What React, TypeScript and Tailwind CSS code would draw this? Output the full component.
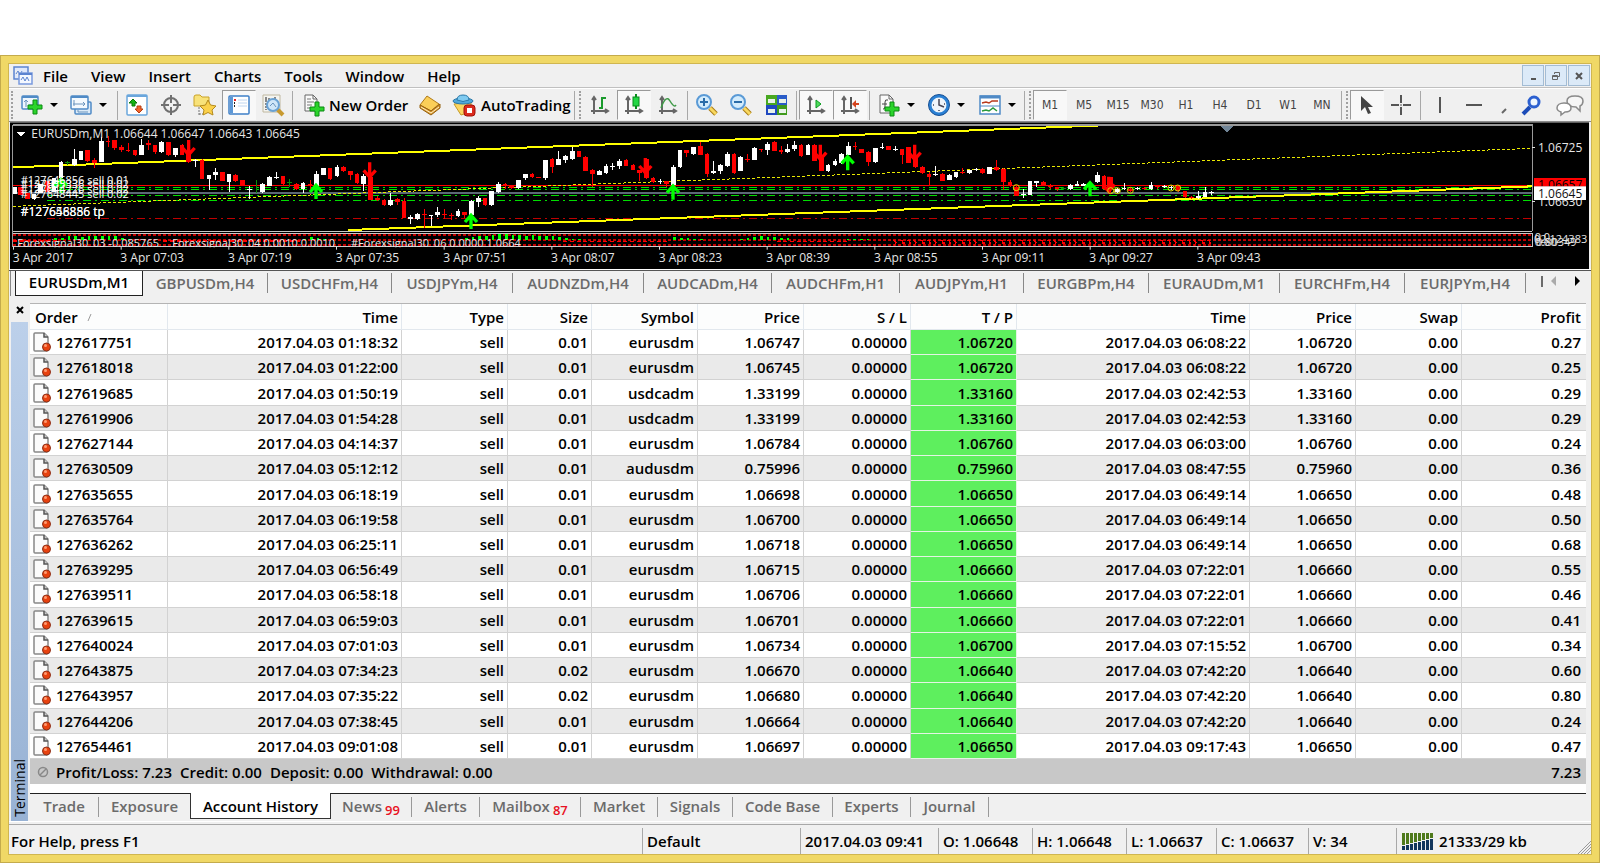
import React from "react";

type Children = { children?: React.ReactNode };

const UI = "font-['Open_Sans','Noto_Sans',sans-serif]";

/* ---------- chart data: [x, bodyTop, bodyBottom, high, low, colour], three units per pixel ---------- */
type Candle = [number, number, number, number, number, "w" | "r" | "g"];

const candlesA: Candle[] = [
  [45, 207, 227, 207, 227, "w"], [62, 208, 230, 208, 232, "r"], [82, 225, 243, 225, 243, "r"], [102, 228, 243, 228, 246, "w"],
  [122, 197, 225, 197, 225, "w"], [142, 190, 222, 190, 222, "r"], [162, 180, 222, 180, 222, "w"], [183, 133, 180, 130, 222, "w"],
  [203, 132, 135, 128, 140, "g"], [223, 124, 140, 93, 145, "w"], [243, 100, 125, 100, 125, "w"], [263, 97, 128, 97, 133, "r"],
  [284, 126, 134, 120, 150, "r"], [304, 68, 133, 58, 133, "w"], [324, 68, 71, 53, 88, "r"], [344, 67, 90, 65, 97, "r"],
  [364, 88, 95, 82, 103, "r"], [384, 95, 98, 74, 103, "r"], [405, 97, 112, 97, 115, "r"], [425, 80, 110, 62, 112, "w"],
  [445, 76, 80, 65, 95, "r"], [465, 82, 103, 80, 107, "r"], [485, 73, 102, 70, 104, "w"], [505, 73, 110, 73, 115, "r"],
  [526, 90, 112, 90, 117, "w"], [546, 80, 110, 78, 110, "r"], [566, 100, 133, 80, 135, "r"], [586, 125, 130, 122, 147, "w"],
  [606, 125, 182, 123, 183, "r"], [627, 170, 183, 170, 215, "w"], [647, 163, 172, 150, 185, "w"], [667, 162, 188, 162, 188, "r"],
  [687, 168, 192, 168, 222, "w"], [707, 170, 190, 168, 192, "r"], [728, 187, 203, 187, 205, "r"], [748, 212, 216, 205, 243, "w"],
  [768, 203, 205, 185, 225, "g"], [788, 197, 222, 195, 225, "w"], [809, 177, 203, 175, 203, "w"], [829, 177, 180, 162, 182, "w"],
  [849, 175, 197, 173, 200, "r"], [869, 192, 195, 182, 207, "g"], [889, 197, 212, 195, 215, "r"], [909, 195, 212, 193, 225, "w"],
  [930, 197, 200, 185, 212, "r"], [950, 168, 205, 160, 222, "w"], [970, 150, 170, 150, 172, "w"], [990, 150, 182, 150, 185, "r"],
  [1011, 147, 175, 140, 178, "w"], [1031, 148, 160, 145, 162, "r"], [1051, 158, 170, 158, 187, "r"], [1071, 168, 195, 165, 198, "r"],
  [1091, 173, 197, 168, 220, "w"], [1111, 177, 245, 170, 247, "r"], [1132, 240, 247, 235, 250, "r"], [1152, 245, 262, 243, 265, "r"],
  [1172, 245, 262, 225, 265, "w"], [1192, 243, 252, 240, 262, "r"],
];
const candlesB: Candle[] = [
  [12, 248, 300, 240, 300, "r"], [32, 298, 303, 292, 318, "w"], [53, 287, 303, 285, 305, "w"], [73, 289, 292, 273, 330, "r"],
  [93, 290, 293, 290, 323, "w"], [113, 283, 290, 268, 297, "w"], [134, 287, 290, 273, 303, "r"], [154, 291, 294, 285, 307, "r"],
  [174, 278, 295, 273, 297, "w"], [194, 283, 292, 283, 300, "r"], [214, 250, 290, 245, 292, "w"], [235, 240, 253, 235, 268, "w"],
  [255, 240, 262, 240, 263, "r"], [275, 220, 262, 218, 264, "w"], [295, 197, 222, 193, 225, "w"], [315, 199, 202, 195, 213, "r"],
  [335, 202, 210, 200, 212, "r"], [355, 187, 210, 185, 212, "w"], [376, 168, 180, 168, 187, "w"], [396, 168, 178, 165, 180, "r"],
  [416, 177, 181, 177, 181, "r"], [436, 127, 180, 127, 187, "w"], [456, 122, 147, 120, 165, "r"], [476, 123, 140, 100, 140, "w"],
  [497, 115, 127, 110, 135, "w"], [517, 98, 122, 87, 125, "w"], [537, 98, 117, 98, 118, "r"], [557, 118, 160, 115, 160, "r"],
  [577, 155, 168, 152, 207, "r"], [598, 160, 170, 157, 172, "w"], [618, 145, 165, 137, 167, "w"], [638, 143, 148, 135, 155, "w"],
  [658, 128, 145, 122, 153, "w"], [678, 125, 143, 122, 145, "r"], [699, 140, 155, 138, 156, "r"], [719, 157, 165, 155, 188, "r"],
  [739, 122, 180, 120, 182, "r"], [759, 180, 192, 178, 195, "r"], [780, 189, 192, 182, 197, "w"], [800, 190, 197, 188, 208, "r"],
  [820, 148, 200, 140, 202, "w"], [840, 97, 148, 95, 150, "w"], [860, 97, 105, 95, 117, "r"], [880, 88, 108, 86, 110, "w"],
  [901, 85, 110, 73, 112, "r"], [921, 108, 168, 106, 178, "r"], [941, 160, 164, 128, 167, "w"], [961, 142, 160, 138, 168, "w"],
  [982, 108, 145, 102, 147, "w"], [1002, 108, 165, 105, 168, "r"], [1022, 117, 158, 115, 160, "w"], [1042, 122, 126, 108, 132, "r"],
  [1063, 90, 125, 88, 127, "w"], [1083, 93, 97, 92, 103, "r"], [1103, 78, 97, 73, 112, "w"], [1123, 72, 98, 70, 98, "r"],
  [1143, 95, 102, 85, 108, "r"], [1163, 93, 102, 78, 105, "w"], [1183, 80, 93, 68, 98, "w"],
];
const candlesC: Candle[] = [
  [3, 80, 115, 78, 117, "r"], [24, 80, 110, 78, 112, "w"], [44, 80, 128, 78, 130, "r"], [64, 120, 158, 100, 160, "r"],
  [84, 140, 160, 138, 162, "w"], [105, 128, 142, 122, 145, "w"], [125, 108, 135, 106, 137, "w"], [145, 83, 110, 73, 112, "w"],
  [165, 85, 88, 72, 95, "r"], [185, 93, 105, 92, 106, "r"], [205, 102, 132, 100, 143, "r"], [226, 90, 132, 90, 134, "w"],
  [246, 86, 90, 75, 92, "w"], [266, 85, 95, 83, 97, "r"], [286, 93, 97, 83, 98, "w"], [306, 93, 110, 92, 138, "r"],
  [326, 88, 135, 86, 136, "r"], [347, 115, 148, 100, 150, "r"], [367, 148, 165, 143, 168, "r"], [387, 168, 178, 163, 200, "r"],
  [407, 168, 172, 145, 174, "w"], [427, 168, 188, 166, 190, "r"], [448, 170, 185, 168, 187, "w"], [468, 163, 178, 161, 180, "w"],
  [488, 161, 165, 150, 167, "r"], [508, 157, 165, 155, 167, "w"], [528, 154, 157, 150, 158, "w"], [548, 153, 165, 150, 167, "r"],
  [568, 148, 167, 146, 169, "w"], [589, 147, 157, 127, 160, "r"], [610, 153, 192, 150, 215, "r"], [630, 192, 205, 187, 207, "r"],
  [650, 207, 233, 200, 235, "r"], [670, 228, 231, 213, 240, "w"], [690, 190, 230, 188, 232, "w"], [710, 190, 194, 188, 207, "w"],
  [731, 192, 202, 190, 205, "r"], [751, 204, 207, 197, 213, "r"], [771, 208, 213, 207, 218, "r"], [791, 209, 212, 206, 215, "g"],
  [811, 200, 213, 197, 215, "w"], [831, 198, 203, 190, 205, "w"], [851, 198, 203, 196, 205, "w"], [892, 170, 193, 162, 195, "w"],
  [912, 173, 213, 171, 215, "r"], [932, 178, 213, 176, 225, "r"], [952, 214, 222, 210, 226, "w"], [972, 210, 214, 195, 217, "w"],
  [992, 212, 220, 207, 223, "r"], [1012, 209, 212, 206, 215, "w"], [1033, 209, 213, 206, 215, "r"], [1053, 200, 213, 193, 215, "w"],
  [1073, 204, 208, 200, 213, "r"], [1093, 203, 207, 200, 210, "w"], [1113, 206, 210, 203, 217, "w"], [1134, 202, 220, 200, 222, "r"],
  [1155, 220, 238, 218, 240, "r"], [1175, 236, 240, 234, 242, "r"], [1195, 235, 240, 218, 242, "w"], [1215, 222, 236, 207, 238, "w"],
  [1235, 222, 226, 218, 230, "w"],
];

const candles: Candle[] = [
  ...candlesA,
  ...candlesB.map((c): Candle => [c[0] + 1200, c[1], c[2], c[3], c[4], c[5]]),
  ...candlesC.map((c): Candle => [c[0] + 2400, c[1], c[2], c[3], c[4], c[5]]),
];
const tone = { w: "#fff", r: "#f00", g: "#0a8a0a" };

const sellArrows: [number, number][] = [[566, 66], [1109, 133], [1936, 120], [2461, 80], [2744, 80], [3326, 176]];
const buyArrows: [number, number][] = [[183, 180], [948, 198], [1413, 288], [2019, 200], [2543, 112], [3270, 190]];
const rings: [number, number][] = [[3049, 209], [3332, 218], [3352, 218], [3391, 217], [3513, 210], [3533, 210]];

const dates = ["3 Apr 2017", "3 Apr 07:03", "3 Apr 07:19", "3 Apr 07:35", "3 Apr 07:51", "3 Apr 08:07", "3 Apr 08:23", "3 Apr 08:39", "3 Apr 08:55", "3 Apr 09:11", "3 Apr 09:27", "3 Apr 09:43"];

/* oscillator columns: [firstX, heights] */
const greenRuns: [number, number[]][] = [
  [163, [6, 8, 12, 14, 10, 12, 14, 12, 14, 12, 6, 4]],
  [910, [5, 9, 7, 4]],
  [1395, [6, 10, 14, 14, 16, 20, 18, 16, 16, 14, 16, 14, 14, 12, 10, 8, 5, 3]],
  [2020, [9, 6, 8, 5, 3]],
  [2220, [5, 6, 11, 13, 11, 10, 8, 6]],
  [2540, [4, 4, 3, 3]],
];
const redMarks: number[] = [];
for (let x = 2680; x < 3640; x += 20) redMarks.push(x);

function PriceChart() {
  return (
    <svg
      className="block h-[147px] w-full bg-black font-['Open_Sans','Noto_Sans',sans-serif] font-normal"
      viewBox="30 12 4740 441"
      preserveAspectRatio="xMinYMid slice"
      role="img"
      aria-label="EURUSDm,M1 price chart"
      fontSize="36"
      fill="#e6e6e6"
    >
      <g shapeRendering="crispEdges" fill="none">
        <path d="M30 13.500H4770" stroke="#606060" strokeWidth="3" />
        <path d="M39 202H4597" stroke="#f00" strokeWidth="3" />
        <path d="M39 225H4597" stroke="#5c6876" strokeWidth="6" />
        <g stroke="#0d0" strokeWidth="3" strokeDasharray="24 12 6 12">
          <path d="M140 208H4597M140 214H4597M140 232H4597M140 247H4597" />
        </g>
        <path d="M140 302H4597" stroke="#c00000" strokeWidth="3" strokeDasharray="24 12 6 12" />
        <path d="M39 265L4597 91" stroke="#e8e800" strokeWidth="3" strokeDasharray="9 6" />
        <path d="M39 148L3308 22" stroke="#ff0" strokeWidth="6" />
        <path d="M1045 336L4597 205" stroke="#ff0" strokeWidth="6" />
      </g>
      <g shapeRendering="crispEdges">
        {candles.map(([x, top, bottom, high, low, c], i) => (
          <g key={i} fill={tone[c]}>
            <rect x={x - 1} y={high} width="3" height={low - high} />
            <rect x={x - 7} y={top} width="14" height={bottom - top} />
          </g>
        ))}
      </g>
      <g fill="none" stroke="#f00" strokeWidth="10">
        {sellArrows.map(([x, y]) => (
          <path key={x} d={`M${x} ${y}v40M${x - 18} ${y + 24}l18 20l18 -20`} />
        ))}
      </g>
      <g fill="none" stroke="#0f0" strokeWidth="10">
        {buyArrows.map(([x, y]) => (
          <path key={x} d={`M${x} ${y + 45}v-40M${x - 18} ${y + 24}l18 -20l18 20`} />
        ))}
      </g>
      <g fill="none" stroke="#dd0" strokeWidth="3">
        {rings.map(([x, y]) => (
          <circle key={x} cx={x} cy={y} r="9" />
        ))}
      </g>
      <g shapeRendering="crispEdges">
        <path d="M39 351H4597M39 366H4597M39 381H4597" stroke="#c00000" strokeWidth="4" strokeDasharray="8 7" />
        {greenRuns.map(([x0, hs]) => hs.map((h, i) => (
          <rect key={`${x0}-${i}`} x={x0 + i * 20} y={367 - h} width="8" height={h} fill="#0f0" />
        )))}
        <path d="M39 368H180M490 368H900M1690 370H2010M2330 370H2540" stroke="#f00" strokeWidth="5" strokeDasharray="12 8" />
        {redMarks.map((x, i) => (
          <path key={x} d={i % 3 ? `M${x} 367h8v8h6` : `M${x} 366l8 8l-6 8`} stroke="#f00" strokeWidth="4" fill="none" />
        ))}
        <path d="M38 21H4597V339M38 21V386" stroke="#9a9a9a" strokeWidth="4" fill="none" />
        <path d="M38 339H4597M38 345H4597V386H38" stroke="#c8c8c8" strokeWidth="3" fill="none" />
        <path d="M4597 87h8M4597 250h8" stroke="#ddd" strokeWidth="3" />
        <path d="M3661 24h39l-19 18z" fill="#708496" />
        <path d="M47 41h30l-15 15z" fill="#fff" />
      </g>
      <text x="94" y="61">EURUSDm,M1 1.06644 1.06647 1.06643 1.06645</text>
      <g fill="#fff" fontSize="33">
        <text x="62" y="199">#127646856 sell 0.01</text>
        <text x="62" y="210">#127635336 sell 0.02</text>
        <text x="62" y="226">#127644226 sell 0.02</text>
        <text x="62" y="239">#127648445 sell 0.02</text>
      </g>
      <text x="62" y="294" fill="#fff">#127646856 tp</text>
      <text x="62" y="294" fill="#fff">#127658886 tp</text>
      <g fontSize="33">
        <text x="52" y="386">Forexsignal30_03 -0.085765</text>
        <text x="517" y="386">Forexsignal30_04 0.0010 0.0010</text>
        <text x="1053" y="386">#Forexsignal30_06 0.0000 1.0664</text>
      </g>
      <rect x="36" y="388" width="4560" height="10" fill="#000" />
      {dates.map((d, i) => (
        <g key={d}>
          <rect x={39 + i * 323} y="386" width="3" height="9" fill="#ddd" />
          <text x={38 + i * 323} y="431">{d}</text>
        </g>
      ))}
      <text x="4614" y="101">1.06725</text>
      <text x="4614" y="263">1.06630</text>
      <rect x="4602" y="180" width="156" height="26" fill="#f00" />
      <svg x="4602" y="180" width="156" height="26" viewBox="4602 180 156 26">
        <text x="4614" y="214" fill="#000">1.06657</text>
      </svg>
      <rect x="4602" y="205" width="156" height="41" fill="#fff" />
      <text x="4614" y="239" fill="#111">1.06645</text>
      <g fontSize="33">
        <text x="4604" y="370">0.0</text>
        <text x="4608" y="384">0.80349</text>
        <text x="4602" y="375">02.124383</text>
        <text x="4604" y="384">0.60</text>
      </g>
    </svg>
  );
}

/* ---------- toolbar pieces ---------- */
function Icon({ w = 24, children }: { w?: number } & Children) {
  return (
    <svg width={w} height="24" viewBox={`0 0 ${w} 24`} fill="none" className="block shrink-0" aria-hidden="true">
      {children}
    </svg>
  );
}
function Tool({ label, on, children }: { label: string; on?: boolean } & Children) {
  return (
    <button
      type="button"
      aria-label={label}
      className={`flex h-[30px] w-[34px] shrink-0 items-center justify-center border ${on ? "border-transparent border-l-[#9a9a9a] border-t-[#9a9a9a] bg-[#f8f8f8]" : "border-transparent"}`}
    >
      {children}
    </button>
  );
}
function Caret({ label }: { label: string }) {
  return (
    <button type="button" aria-label={label} className="flex h-[30px] w-[15px] shrink-0 items-center pl-px">
      <svg width="8" height="4" viewBox="0 0 8 4" aria-hidden="true"><path d="M0 0h8L4 4z" fill="#000" /></svg>
    </button>
  );
}
function Sep() {
  return <span className="mx-[2px] h-[29px] w-px shrink-0 bg-[#a8a8a8]" />;
}
function Grip() {
  return <span className="ml-[2px] mr-[2px] h-[28px] shrink-0 border-l-2 border-dotted border-[#a0a0a0]" />;
}
const Axes = () => (
  <path d="M6 4v17M3 18h17M4 7l2-3 2 3M17 16l3 2-3 2" stroke="#666" strokeWidth="2" />
);
const GreenPlus = ({ x, y }: { x: number; y: number }) => (
  <path d={`M${x + 5} ${y}h4v5h5v4h-5v5h-4v-5h-5v-4h5z`} fill="#2bd42b" stroke="#0a8a12" />
);
const Page = () => (
  <>
    <path d="M3 2h9l4 4v14H3z" fill="#fafafa" stroke="#666" />
    <path d="M12 2v4h4" stroke="#666" />
  </>
);

function ToolBar() {
  return (
    <div role="toolbar" aria-label="Main toolbar" className="flex h-[34px] items-center overflow-hidden border-b border-[#8c8c8c] border-t border-t-white bg-[#f0f0f0]">
      <Grip />
      <Tool label="New chart">
        <Icon>
          <rect x="2" y="3" width="16" height="13" rx="1" fill="#eef6fd" stroke="#4f8ac6" strokeWidth="1.500" />
          <path d="M2 4h16" stroke="#4f8ac6" strokeWidth="2" />
          <path d="M6 7v7M4 9l2-2 2 2M9 12h6" stroke="#6a94bd" />
          <GreenPlus x={8} y={7} />
        </Icon>
      </Tool>
      <Caret label="New chart options" />
      <Tool label="Profiles">
        <Icon>
          <rect x="6" y="9" width="16" height="12" rx="1" fill="#dcebf8" stroke="#4f8ac6" strokeWidth="1.500" />
          <rect x="2" y="3" width="17" height="13" rx="1" fill="#f3f9fe" stroke="#4f8ac6" strokeWidth="1.500" />
          <path d="M2 4h17" stroke="#4f8ac6" strokeWidth="2" />
          <path d="M5 7v6M4 11h12M14 9l2 2-2 2M9 17v2h10" stroke="#6a94bd" />
        </Icon>
      </Tool>
      <Caret label="Profile options" />
      <span className="w-[2px]" />
      <Sep />
      <Tool label="Market watch">
        <Icon>
          <rect x="2" y="2" width="20" height="20" rx="1" fill="#fff" stroke="#6aa6dc" strokeWidth="1.500" />
          <path d="M2 3h20" stroke="#6aa6dc" strokeWidth="2" />
          <path d="M4 10l4-4 4 4H10v3H7v-3z" fill="#14b414" stroke="#087808" />
          <path d="M10 16l4 4 4-4h-2v-3h-4v3z" fill="#f2632c" stroke="#b43c10" />
        </Icon>
      </Tool>
      <Tool label="Data window">
        <Icon>
          <circle cx="12" cy="12" r="7" stroke="#707070" strokeWidth="2" />
          <path d="M12 2v8M12 14v8M2 12h8M14 12h8" stroke="#707070" strokeWidth="2" />
        </Icon>
      </Tool>
      <Tool label="Navigator">
        <Icon>
          <path d="M1 4q0-2 2-2h4l2 2h7v9H1z" fill="#f8e27a" stroke="#c9a227" />
          <path d="M6 14v8M6 21h6" stroke="#777" strokeDasharray="2 1" />
          <path d="M15 7l2.500 5 5.500 1-4 4 1 5-5-2.500-5 2.500 1-5-4-4 5.500-1z" fill="#fbd14b" stroke="#b48a1c" />
        </Icon>
      </Tool>
      <Tool label="Terminal" on>
        <Icon>
          <rect x="2" y="3" width="20" height="18" rx="1" fill="#fff" stroke="#3f80c8" strokeWidth="1.500" />
          <rect x="3" y="4" width="3" height="16" fill="#5d98d6" />
          <path d="M7 7h2" stroke="#e22" strokeWidth="2" />
          <path d="M7 10h1M7 13h1" stroke="#222" strokeWidth="2" />
          <path d="M11 7h9M11 10h9M11 13h9" stroke="#c0d6f0" />
        </Icon>
      </Tool>
      <Tool label="Strategy tester">
        <Icon>
          <path d="M2 2h17v17H2z" fill="#f4f4f0" stroke="#c0b8a0" />
          <path d="M5 4v13M4 6h5M14 4v5h4" stroke="#888" strokeDasharray="2 1" strokeWidth="2" />
          <path d="M16 16l6 6" stroke="#c89a30" strokeWidth="4" />
          <circle cx="12" cy="12" r="6" fill="#cfe6f8" stroke="#6aa2d4" strokeWidth="2" />
          <path d="M9 13l3-3 3 4" stroke="#6a94bd" />
        </Icon>
      </Tool>
      <Sep />
      <button type="button" className="flex h-[30px] w-[118px] shrink-0 items-center gap-[4px] whitespace-nowrap pl-[8px] text-left">
        <Icon w={22}>
          <path d="M2 2h8l4 4v12H2z" fill="#fafafa" stroke="#666" />
          <path d="M10 2v4h4" stroke="#666" />
          <path d="M4 6h4M4 9h7M4 12h5M4 15h3" stroke="#777" />
          <GreenPlus x={7} y={9} />
        </Icon>
        New Order
      </button>
      <Tool label="MetaEditor">
        <Icon>
          <path d="M9 3l12 8-8 7L2 12z" fill="#fbcf58" stroke="#b07a18" />
          <path d="M2 12v3l11 7 9-7v-4l-9 7z" fill="#d9962c" stroke="#94600f" />
          <path d="M3 14l10 6 8-6" stroke="#fff3c8" />
        </Icon>
      </Tool>
      <button type="button" className="flex h-[30px] w-[125px] shrink-0 items-center gap-[5px] whitespace-nowrap pl-[5px] text-left">
        <Icon>
          <path d="M2 11l7 11 10-3V9z" fill="#fbd560" stroke="#c39a26" />
          <ellipse cx="11" cy="8" rx="10" ry="3" fill="#4fa8da" stroke="#2a78a8" />
          <path d="M5 7q0-5 6-5t6 5q-6 3-12 0z" fill="#7fcaf0" stroke="#2a78a8" />
          <rect x="12" y="12" width="11" height="11" rx="3" fill="#dc2a1c" stroke="#a01008" />
          <rect x="15" y="15" width="5" height="5" fill="#fff" />
        </Icon>
        AutoTrading
      </button>
      <Sep />
      <Grip />
      <Tool label="Bar chart">
        <Icon><Axes /><path d="M14 4v12M11 15h3M14 5h4" stroke="#1a9a2c" strokeWidth="2" /></Icon>
      </Tool>
      <Tool label="Candlesticks" on>
        <Icon><Axes /><path d="M14 1v15" stroke="#078a1a" strokeWidth="2" /><rect x="11" y="4" width="6" height="9" fill="#22d644" stroke="#078a1a" /></Icon>
      </Tool>
      <Tool label="Line chart">
        <Icon><Axes /><path d="M5 15q5-14 9-7t6 4" stroke="#3f9a48" strokeWidth="1.500" /></Icon>
      </Tool>
      <Sep />
      <Tool label="Zoom in">
        <Icon>
          <path d="M15 15l6 6" stroke="#a87c14" strokeWidth="5" /><path d="M15 15l6 6" stroke="#f8d860" strokeWidth="3" />
          <circle cx="9" cy="9" r="7" fill="#d4ecfc" stroke="#5a9ad6" strokeWidth="2" />
          <path d="M5 9h8M9 5v8" stroke="#2a6ca8" strokeWidth="2" />
        </Icon>
      </Tool>
      <Tool label="Zoom out">
        <Icon>
          <path d="M15 15l6 6" stroke="#a87c14" strokeWidth="5" /><path d="M15 15l6 6" stroke="#f8d860" strokeWidth="3" />
          <circle cx="9" cy="9" r="7" fill="#d4ecfc" stroke="#5a9ad6" strokeWidth="2" />
          <path d="M5 9h8" stroke="#2a6ca8" strokeWidth="2" />
        </Icon>
      </Tool>
      <span className="w-[2px]" />
      <Tool label="Tile windows">
        <Icon>
          <rect x="1" y="2" width="11" height="10" fill="#48a820" /><rect x="12" y="2" width="10" height="10" fill="#2a5cc8" />
          <rect x="1" y="12" width="11" height="10" fill="#1f48c0" /><rect x="12" y="12" width="10" height="10" fill="#3f9a1c" />
          <path d="M3 6h7v4H3zM14 6h7v4h-7zM3 16h7v4H3zM14 16h7v4h-7z" fill="#e8f2ea" />
        </Icon>
      </Tool>
      <Sep />
      <Tool label="Auto scroll" on>
        <Icon><Axes /><path d="M12 7l5 4-5 4z" fill="#4fdc5c" stroke="#0a9a20" /></Icon>
      </Tool>
      <Tool label="Chart shift" on>
        <Icon><Axes /><path d="M13 4v12" stroke="#555" strokeWidth="2" /><path d="M14 11l4-4v3h3v2h-3v3z" fill="#d4421c" /></Icon>
      </Tool>
      <Sep />
      <Tool label="Indicators">
        <Icon>
          <Page />
          <path d="M6 16q2 1 2-3V9q0-3 3-2M5 11h5" stroke="#444" />
          <GreenPlus x={8} y={9} />
        </Icon>
      </Tool>
      <Caret label="Indicator list" />
      <span className="w-px" />
      <Tool label="Periodicity">
        <Icon>
          <circle cx="12" cy="12" r="9" fill="#eef4fa" stroke="#2a80d4" strokeWidth="3" />
          <circle cx="12" cy="12" r="10.500" stroke="#164f94" />
          <path d="M12 6v6l5 2M6 12h1M12 18v-1M18 11h-1" stroke="#445" strokeWidth="1.500" />
        </Icon>
      </Tool>
      <Caret label="Periodicity list" />
      <span className="w-[2px]" />
      <Tool label="Templates">
        <Icon>
          <rect x="2" y="3" width="20" height="18" fill="#fff" stroke="#4f8ac6" strokeWidth="1.500" />
          <path d="M2 4h20" stroke="#4f8ac6" strokeWidth="3" />
          <path d="M2 13h20" stroke="#4f8ac6" />
          <path d="M4 10l4-1 3 1 3-2h6" stroke="#b83a1c" strokeWidth="1.500" />
          <path d="M4 18l4-1 3 1 4-3 4 3" stroke="#2a9a3c" strokeWidth="1.500" />
        </Icon>
      </Tool>
      <Caret label="Template list" />
      <Sep />
      <Grip />
      {["M1", "M5", "M15", "M30", "H1", "H4", "D1", "W1", "MN"].map((p) => (
        <button
          type="button"
          key={p}
          className={`h-[30px] w-[34px] shrink-0 border font-['DejaVu_Sans_Condensed','DejaVu_Sans',sans-serif] text-[12px] font-normal text-[#444] ${p === "M1" ? "border-transparent border-l-[#9a9a9a] border-t-[#9a9a9a] bg-[#f8f8f8]" : "border-transparent"}`}
        >
          {p}
        </button>
      ))}
      <Sep />
      <Grip />
      <Tool label="Cursor" on>
        <Icon><path d="M6 3v15l4-4 3 7 3-1-3-6h5z" fill="#444" /></Icon>
      </Tool>
      <Tool label="Crosshair">
        <Icon><path d="M12 2v8M12 14v8M2 12h8M14 12h8" stroke="#555" strokeWidth="2" /><path d="M11 12h2" stroke="#555" /></Icon>
      </Tool>
      <Sep />
      <Tool label="Vertical line"><Icon><path d="M12 4v16" stroke="#555" strokeWidth="2" /></Icon></Tool>
      <Tool label="Horizontal line"><Icon><path d="M4 12h16" stroke="#555" strokeWidth="2" /></Icon></Tool>
      <button type="button" aria-label="Trend line" className="flex h-[30px] w-[18px] shrink-0 items-center justify-end">
        <Icon w={8}><path d="M1 20l4-4" stroke="#666" strokeWidth="2" /></Icon>
      </button>
      <span className="flex-1" />
      <Tool label="Search">
        <Icon>
          <path d="M3 21l7-7" stroke="#1c4cb8" strokeWidth="4" />
          <circle cx="14" cy="9" r="5" fill="#eef6ff" stroke="#2c60d0" strokeWidth="3" />
        </Icon>
      </Tool>
      <button type="button" aria-label="Chat" className="flex h-[30px] w-[42px] shrink-0 items-center justify-center">
        <Icon w={30}>
          <path d="M20 3c5 0 8 2 8 5s-1 4-3 5v5l-4-4c-6 0-9-2-9-6s3-5 8-5z" fill="#f6f6f6" stroke="#8a8a8a" strokeWidth="1.500" />
          <path d="M9 10c5 0 7 2 7 5s-3 4-6 4l-4 3v-3c-3-1-4-2-4-4 0-3 3-5 7-5z" fill="#fff" stroke="#8a8a8a" strokeWidth="1.500" />
        </Icon>
      </button>
    </div>
  );
}

function MenuBar() {
  const sys = "flex h-[21px] w-[22px] items-center justify-center border border-[#a3bcd4] bg-[#dceaf8]";
  return (
    <div className="flex h-[24px] items-center border-b border-[#c0c0c0] bg-[#f0f0f0] pl-[4px]">
      <svg width="20" height="20" viewBox="0 0 20 20" fill="none" aria-hidden="true">
        <path d="M1 4V1h14v6M1 4v9h5" fill="#dfe8fb" stroke="#5c84d0" strokeWidth="1.500" />
        <path d="M3 8l2-3 2 4 2-4" stroke="#5c84d0" />
        <rect x="6" y="7" width="13" height="11" fill="#f4f8ff" stroke="#7a9ade" strokeWidth="1.500" />
        <path d="M6 8h13" stroke="#5c84d0" strokeWidth="2" />
        <path d="M8 14l2-3 2 4 2-4 2 4" stroke="#5c84d0" />
      </svg>
      <nav aria-label="Application menu" className="ml-[10px] flex gap-[23px]">
        {["File", "View", "Insert", "Charts", "Tools", "Window", "Help"].map((m) => (
          <button type="button" key={m}>{m}</button>
        ))}
      </nav>
      <div className="ml-auto flex gap-px pr-px">
        <button type="button" aria-label="Minimize" className={sys}>
          <svg width="10" height="10" aria-hidden="true"><path d="M3 8h5" stroke="#555" strokeWidth="2" /></svg>
        </button>
        <button type="button" aria-label="Restore" className={sys}>
          <svg width="10" height="10" fill="none" stroke="#666" aria-hidden="true"><path d="M3.500 3V1.500h5v4H7M1.500 4.500h5v4h-5zM2 5.500h4" /></svg>
        </button>
        <button type="button" aria-label="Close" className={sys}>
          <svg width="10" height="10" aria-hidden="true"><path d="M2 2l6 6M8 2L2 8" stroke="#555" strokeWidth="2" /></svg>
        </button>
      </div>
    </div>
  );
}

const chartTabs: [string, string][] = [
  ["GBPUSDm,H4", "w-[125px]"], ["USDCHFm,H4", "w-[124px]"], ["USDJPYm,H4", "w-[121px]"], ["AUDNZDm,H4", "w-[131px]"],
  ["AUDCADm,H4", "w-[128px]"], ["AUDCHFm,H1", "w-[128px]"], ["AUDJPYm,H1", "w-[124px]"], ["EURGBPm,H4", "w-[125px]"],
  ["EURAUDm,M1", "w-[131px]"], ["EURCHFm,H4", "w-[125px]"], ["EURJPYm,H4", "w-[121px]"],
];

function ChartTabs() {
  return (
    <div className="flex h-[28px] items-start overflow-hidden border-t border-[#555] bg-[#f0f0f0] pl-px text-[#6b6b6b]">
      <span className="h-[25px] w-[5px] shrink-0 border-l border-[#888]" />
      <button type="button" className="flex h-[25px] w-[128px] shrink-0 justify-center border border-t-0 border-[#222] bg-white pt-px text-black">EURUSDm,M1</button>
      {chartTabs.map(([name, w]) => (
        <button type="button" key={name} className={`flex h-[23px] shrink-0 items-center justify-center ${w}`}>
          <span className="flex-1 text-center">{name}</span>
          <span className="h-[20px] w-px bg-[#888]" />
        </button>
      ))}
      <span className="ml-auto flex h-[20px] items-center gap-[8px] pr-[11px]">
        <span className="h-[11px] w-[2px] bg-[#6b6b6b]" />
        <button type="button" aria-label="Previous charts"><svg width="5" height="10" aria-hidden="true"><path d="M5 0v10L0 5z" fill="#aaa" /></svg></button>
        <button type="button" aria-label="Next charts" className="ml-[11px]"><svg width="5" height="10" aria-hidden="true"><path d="M0 0v10l5-5z" fill="#000" /></svg></button>
      </span>
    </div>
  );
}

/* ---------- account history ---------- */
type Row = [string, string, string, string, string, string, string, string, string];
const rows: Row[] = [
  ["127617751", "01:18:32", "0.01", "eurusdm", "1.06747", "1.06720", "06:08:22", "1.06720", "0.27"],
  ["127618018", "01:22:00", "0.01", "eurusdm", "1.06745", "1.06720", "06:08:22", "1.06720", "0.25"],
  ["127619685", "01:50:19", "0.01", "usdcadm", "1.33199", "1.33160", "02:42:53", "1.33160", "0.29"],
  ["127619906", "01:54:28", "0.01", "usdcadm", "1.33199", "1.33160", "02:42:53", "1.33160", "0.29"],
  ["127627144", "04:14:37", "0.01", "eurusdm", "1.06784", "1.06760", "06:03:00", "1.06760", "0.24"],
  ["127630509", "05:12:12", "0.01", "audusdm", "0.75996", "0.75960", "08:47:55", "0.75960", "0.36"],
  ["127635655", "06:18:19", "0.01", "eurusdm", "1.06698", "1.06650", "06:49:14", "1.06650", "0.48"],
  ["127635764", "06:19:58", "0.01", "eurusdm", "1.06700", "1.06650", "06:49:14", "1.06650", "0.50"],
  ["127636262", "06:25:11", "0.01", "eurusdm", "1.06718", "1.06650", "06:49:14", "1.06650", "0.68"],
  ["127639295", "06:56:49", "0.01", "eurusdm", "1.06715", "1.06660", "07:22:01", "1.06660", "0.55"],
  ["127639511", "06:58:18", "0.01", "eurusdm", "1.06706", "1.06660", "07:22:01", "1.06660", "0.46"],
  ["127639615", "06:59:03", "0.01", "eurusdm", "1.06701", "1.06660", "07:22:01", "1.06660", "0.41"],
  ["127640024", "07:01:03", "0.01", "eurusdm", "1.06734", "1.06700", "07:15:52", "1.06700", "0.34"],
  ["127643875", "07:34:23", "0.02", "eurusdm", "1.06670", "1.06640", "07:42:20", "1.06640", "0.60"],
  ["127643957", "07:35:22", "0.02", "eurusdm", "1.06680", "1.06640", "07:42:20", "1.06640", "0.80"],
  ["127644206", "07:38:45", "0.01", "eurusdm", "1.06664", "1.06640", "07:42:20", "1.06640", "0.24"],
  ["127654461", "09:01:08", "0.01", "eurusdm", "1.06697", "1.06650", "09:17:43", "1.06650", "0.47"],
];
const heads = ["Time", "Type", "Size", "Symbol", "Price", "S / L", "T / P", "Time", "Price", "Swap"];

function OrderIcon() {
  return (
    <svg width="18" height="20" viewBox="0 0 18 20" fill="none" className="shrink-0" aria-hidden="true">
      <path d="M1 2q0-1 1-1H11l4 4v13q0 1-1 1H2q-1 0-1-1z" fill="#fbfbfb" stroke="#888" strokeWidth="1.500" />
      <path d="M11 1v4h4" fill="#ccc" stroke="#555" strokeWidth="1.500" />
      <circle cx="13.500" cy="15" r="4" fill="#e8420f" stroke="#8c3018" />
      <circle cx="12.500" cy="13.500" r="1.500" fill="#ff9a70" />
    </svg>
  );
}

function HistoryTable() {
  const cell = "border-b border-r border-[#d2d2d2] p-0 pr-[3px]";
  return (
    <table className="h-[480px] w-full table-fixed border-separate border-spacing-0 whitespace-nowrap text-right">
      <colgroup>
        <col className="w-[138px]" /><col className="w-[234px]" /><col className="w-[106px]" /><col className="w-[84px]" />
        <col className="w-[106px]" /><col className="w-[106px]" /><col className="w-[107px]" /><col className="w-[106px]" />
        <col className="w-[233px]" /><col className="w-[106px]" /><col className="w-[106px]" /><col />
      </colgroup>
      <thead>
        <tr className="h-[26px] bg-[#fcfdfd]">
          <th scope="col" className="border-b border-r border-[#e2e8ee] p-0 pl-[5px] text-left font-semibold">
            Order <svg width="6" height="8" className="ml-[5px] inline-block align-middle" aria-hidden="true"><path d="M1 7L4 0" stroke="#999" /></svg>
          </th>
          {heads.map((h, i) => (
            <th scope="col" key={i} className="border-b border-r border-[#e2e8ee] p-0 pr-[3px] font-semibold">{h}</th>
          ))}
          <th scope="col" className="border-b border-[#e2e8ee] p-0 pr-[5px] font-semibold">Profit</th>
        </tr>
      </thead>
      <tbody>
        {rows.map(([order, opened, size, symbol, price, tp, closed, exit, profit], i) => (
          <tr key={order} className={`h-[25px] ${i % 2 ? "bg-[#eaeaea]" : "bg-white"}`}>
            <td className={`${cell} pl-[3px]`}>
              <span className="flex items-center gap-[5px]"><OrderIcon />{order}</span>
            </td>
            <td className={cell}>2017.04.03 {opened}</td>
            <td className={cell}>sell</td>
            <td className={cell}>{size}</td>
            <td className={cell}>{symbol}</td>
            <td className={cell}>{price}</td>
            <td className={cell}>0.00000</td>
            <td className="border-b border-r border-[#e4f4e4] bg-[#5eef5e] p-0 pr-[3px]">{tp}</td>
            <td className={cell}>2017.04.03 {closed}</td>
            <td className={cell}>{exit}</td>
            <td className={cell}>0.00</td>
            <td className="border-b border-[#d2d2d2] p-0 pr-[5px]">{profit}</td>
          </tr>
        ))}
      </tbody>
      <tfoot>
        <tr className="h-[25px] bg-[#c8c8c8]">
          <td colSpan={11} className="p-0 pl-[7px] text-left">
            <span className="flex items-center">
              <svg width="12" height="12" fill="none" stroke="#888" strokeWidth="1.500" className="mr-[7px]" aria-hidden="true"><circle cx="6" cy="6" r="4.500" /><path d="M3 9l6-6" /></svg>
              <span className="flex gap-[8px]">
                <span>Profit/Loss: 7.23</span><span>Credit: 0.00</span><span>Deposit: 0.00</span><span>Withdrawal: 0.00</span>
              </span>
            </span>
          </td>
          <td className="p-0 pr-[5px]">7.23</td>
        </tr>
      </tfoot>
    </table>
  );
}

const terminalTabs: [string, string, string][] = [
  ["Trade", "w-[69px]", ""], ["Exposure", "w-[91px]", ""], ["Account History", "w-[141px]", ""], ["News", "w-[81px]", "99"],
  ["Alerts", "w-[68px]", ""], ["Mailbox", "w-[101px]", "87"], ["Market", "w-[77px]", ""], ["Signals", "w-[75px]", ""],
  ["Code Base", "w-[100px]", ""], ["Experts", "w-[78px]", ""], ["Journal", "w-[78px]", ""],
];

function TerminalTabs() {
  return (
    <div className="flex h-[28px] bg-[#f0f0f0] text-[#6b6b6b]">
      {terminalTabs.map(([name, w, count]) =>
        name === "Account History" ? (
          <button type="button" key={name} className={`h-[26px] shrink-0 border border-t-0 border-[#333] bg-white text-black ${w}`}>{name}</button>
        ) : (
          <button type="button" key={name} className={`flex h-full shrink-0 items-start border-t border-[#222] ${w}`}>
            <span className="mt-[2px] flex-1 text-center">
              {name}
              {count && <sub className="ml-[3px] text-[13px] leading-none text-[#e81123]">{count}</sub>}
            </span>
            {name !== "Exposure" && <span className="mt-[3px] h-[20px] w-px bg-[#999]" />}
          </button>
        )
      )}
      <span className="flex-1 border-t border-[#222]" />
    </div>
  );
}

const statusCells: [string, string][] = [
  ["For Help, press F1", "w-[633px] pl-[2px]"], ["Default", "w-[158px] border-l pl-[4px]"], ["2017.04.03 09:41", "w-[138px] border-l pl-[4px]"],
  ["O: 1.06648", "w-[94px] border-l pl-[4px]"], ["H: 1.06648", "w-[94px] border-l pl-[4px]"], ["L: 1.06637", "w-[90px] border-l pl-[4px]"],
  ["C: 1.06637", "w-[92px] border-l pl-[4px]"], ["V: 34", "w-[88px] border-l pl-[4px]"],
];

function StatusBar() {
  return (
    <div role="status" className="flex h-[30px] items-end overflow-hidden border-t border-[#a8a8a8] bg-[#f0f0f0]">
      {statusCells.map(([t, c]) => (
        <span key={t} className={`flex h-[26px] shrink-0 items-center whitespace-nowrap border-[#a8a8a8] ${c}`}>{t}</span>
      ))}
      <span className="flex h-[26px] flex-1 items-center gap-[5px] border-l border-[#a8a8a8] pl-[4px]">
        <svg width="33" height="17" shapeRendering="crispEdges" aria-hidden="true">
          {[0, 1, 2, 3, 4, 5, 6, 7].map((i) => (
            <g key={i}>
              <rect x={i * 4 + 1} y="0" width="3" height={12 - i} fill="#4f7a1c" />
              <rect x={i * 4 + 1} y={13 - i} width="3" height={4 + i} fill="#12365c" />
            </g>
          ))}
        </svg>
        21333/29 kb
        <svg width="13" height="13" className="ml-auto self-end" stroke="#999" aria-hidden="true"><path d="M0 13L13 0M3 13L13 3M6 13l7-7M9 13l4-4" /></svg>
      </span>
    </div>
  );
}

export default function App() {
  return (
    <div className={`min-h-screen bg-white pt-[55px] text-[15px] font-semibold leading-[20px] text-black ${UI}`}>
      <div className="border border-[#c4ab4c] bg-[#f0d866] p-[7px]">
        <div className="border border-[#d0b650] bg-[#f0f0f0]">
          <MenuBar />
          <ToolBar />
          <div className="pl-px pr-[2px]"><PriceChart /></div>
          <div className="h-px bg-white" />
          <ChartTabs />
          <div className="flex pl-[2px] pr-[5px]">
            <div className="flex w-[17px] shrink-0 flex-col">
              <button type="button" aria-label="Close terminal" className="flex h-[24px] items-center justify-center">
                <svg width="8" height="8" aria-hidden="true"><path d="M1 1l6 6M7 1L1 7" stroke="#000" strokeWidth="2" /></svg>
              </button>
              <div className="flex flex-1 items-end justify-center bg-gradient-to-b from-[#bcd0ea] to-[#98b2d4] pb-[4px]">
                <span className="rotate-180 text-[14px] font-normal leading-[17px] [writing-mode:vertical-rl]">Terminal</span>
              </div>
            </div>
            <div className="ml-[2px] mt-[5px] min-w-0 flex-1 border-t border-[#b4b4b4] bg-white">
              <HistoryTable />
              <div className="h-[9px]" />
              <TerminalTabs />
            </div>
          </div>
          <div className="h-[3px] border-t border-white" />
          <StatusBar />
        </div>
      </div>
    </div>
  );
}
